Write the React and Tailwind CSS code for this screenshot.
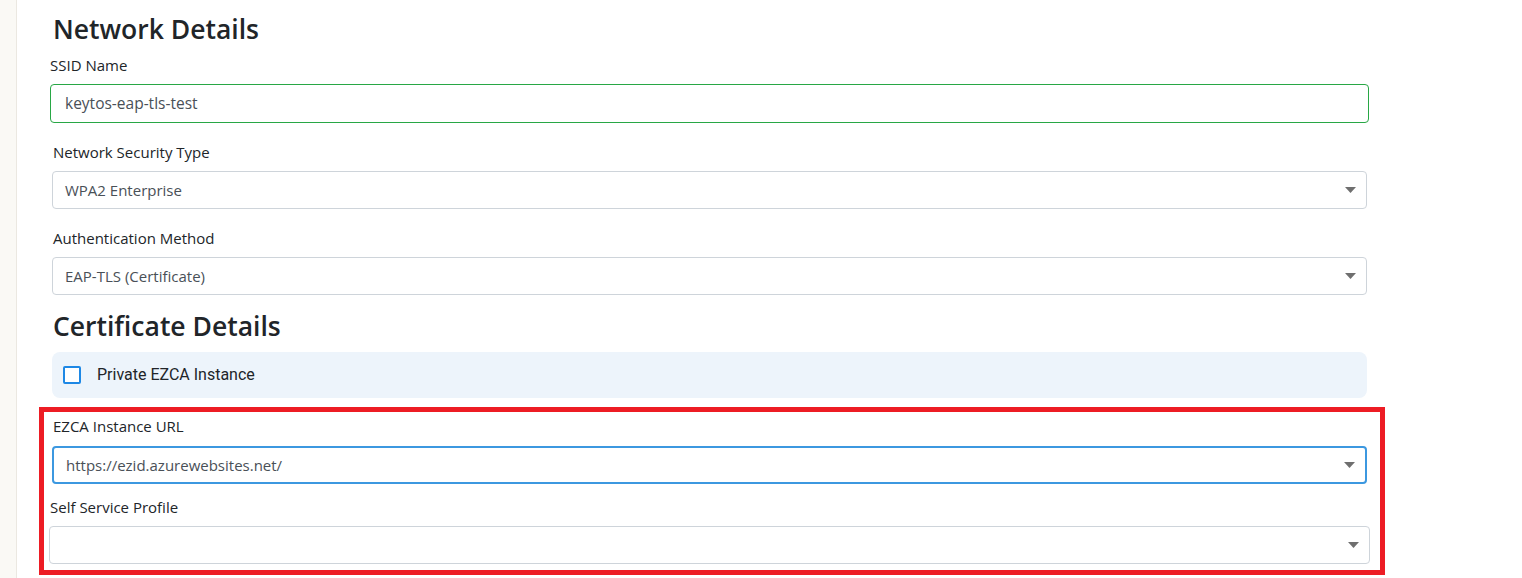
const FONT = { fontFamily: '"Open Sans", "Noto Sans", sans-serif' };

function Caret() {
  return (
    <svg width="11" height="6" viewBox="0 0 11 6" className="shrink-0">
      <path d="M0 0h11L5.5 6z" fill="#6f6f6f" />
    </svg>
  );
}

function Label({ children, className = "" }) {
  return <div className={`text-[15px] leading-[22px] text-[#212529] ${className}`}>{children}</div>;
}

function Select({ value, className = "" }) {
  return (
    <div
      className={`flex items-center justify-between h-[38px] rounded-[4px] bg-white pl-[12px] pr-[10px] text-[15px] text-[#495057] ${className}`}
    >
      <span>{value}</span>
      <Caret />
    </div>
  );
}

export default function App() {
  return (
    <div className="flex h-[578px] overflow-hidden bg-white" style={FONT}>
      <div className="w-[17px] shrink-0 bg-[#faf9f5] border-r border-[#ebe8e1]" />

      <div className="w-[1353px] shrink-0 pl-[33px]">
        <h1 className="mt-[12px] ml-[3px] text-[26.5px] leading-[34px] font-semibold text-[#212529]">Network Details</h1>

        <Label className="mt-[8px]">SSID Name</Label>
        <div className="mt-[8px] flex items-center h-[39px] w-[1319px] rounded-[4px] border border-[#28a745] pl-[14px] text-[15.5px] text-[#495057]">
          keytos-eap-tls-test
        </div>

        <Label className="mt-[18px] ml-[3px]">Network Security Type</Label>
        <Select value="WPA2 Enterprise" className="mt-[8px] ml-[2px] w-[1315px] border border-[#ced4da]" />

        <Label className="mt-[18px] ml-[3px]">Authentication Method</Label>
        <Select value="EAP-TLS (Certificate)" className="mt-[8px] ml-[2px] w-[1315px] border border-[#ced4da]" />

        <h2 className="mt-[14px] ml-[3px] text-[26.5px] leading-[34px] font-semibold text-[#212529]">Certificate Details</h2>

        <div className="mt-[9px] ml-[2px] w-[1315px] h-[46px] rounded-[8px] bg-[#edf4fb] flex items-center pl-[11px]">
          <div className="w-[18px] h-[18px] rounded-[2px] border-2 border-[#1e88e5] bg-white" />
          <span className="ml-[16px] text-[16px] text-[#212529]" style={{ fontFamily: "Roboto, sans-serif" }}>
            Private EZCA Instance
          </span>
        </div>

        <div className="mt-[9px] -ml-[11px] w-[1346px] h-[168px] border-[5px] border-[#ed1c24] pl-[5px]">
          <Label className="mt-[3px] ml-[4px]">EZCA Instance URL</Label>
          <Select
            value="https://ezid.azurewebsites.net/"
            className="mt-[9px] ml-[3px] w-[1315px] border-2 border-[#3c98e0] pl-[11px] pr-[9px]"
          />
          <Label className="mt-[12px] ml-[1px]">Self Service Profile</Label>
          <Select value="" className="mt-[8px] w-[1321px] border border-[#ced4da] pr-[7px]" />
        </div>
      </div>
    </div>
  );
}
